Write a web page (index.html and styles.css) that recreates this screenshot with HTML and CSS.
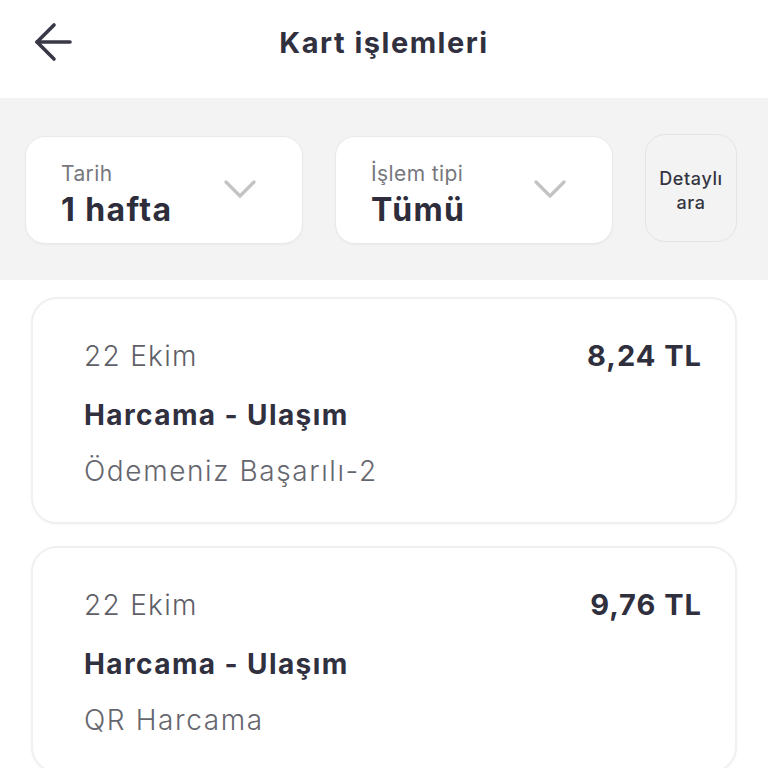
FILE: index.html
```html
<!DOCTYPE html>
<html lang="tr">
<head>
<meta charset="utf-8">
<link rel="stylesheet" href="styles.css">
</head>
<body>
<header class="topbar">
  <div class="back">
    <svg width="40" height="40" viewBox="0 0 40 40" fill="none" stroke="#383846" stroke-width="3.6" stroke-linecap="round" stroke-linejoin="round">
      <path d="M3 20 H36"/>
      <path d="M20 3 L3 20 L20 37"/>
    </svg>
  </div>
  <h1 class="title">Kart işlemleri</h1>
  <div class="spacer"></div>
</header>

<section class="filters">
  <div class="filter">
    <div class="filter-text">
      <div class="filter-label">Tarih</div>
      <div class="filter-value">1 hafta</div>
    </div>
    <svg class="chev" width="32" height="18" viewBox="0 0 32 18" fill="none" stroke="#c3c3c6" stroke-width="3.2" stroke-linecap="round" stroke-linejoin="round"><path d="M2 2 L16 16 L30 2"/></svg>
  </div>
  <div class="filter">
    <div class="filter-text">
      <div class="filter-label">İşlem tipi</div>
      <div class="filter-value">Tümü</div>
    </div>
    <svg class="chev" width="32" height="18" viewBox="0 0 32 18" fill="none" stroke="#c3c3c6" stroke-width="3.2" stroke-linecap="round" stroke-linejoin="round"><path d="M2 2 L16 16 L30 2"/></svg>
  </div>
  <div class="detail">Detaylı<br>ara</div>
</section>

<main class="list">
  <article class="tx">
    <div class="tx-row">
      <span class="tx-date">22 Ekim</span>
      <span class="tx-amount">8,24 TL</span>
    </div>
    <div class="tx-title">Harcama - Ulaşım</div>
    <div class="tx-sub">Ödemeniz Başarılı-2</div>
  </article>
  <article class="tx">
    <div class="tx-row">
      <span class="tx-date">22 Ekim</span>
      <span class="tx-amount">9,76 TL</span>
    </div>
    <div class="tx-title">Harcama - Ulaşım</div>
    <div class="tx-sub">QR Harcama</div>
  </article>
</main>
</body>
</html>
```

FILE: styles.css
```css
* { box-sizing: border-box; }
html, body { margin: 0; padding: 0; background: #ffffff; }
body {
  width: 768px;
  height: 768px;
  overflow: hidden;
  font-family: Inter, "Noto Sans", sans-serif;
  color: #2f2f3e;
}

.topbar {
  height: 98px;
  display: grid;
  grid-template-columns: 100px 1fr 100px;
  align-items: center;
  padding-bottom: 14px;
  background: #fff;
}
.back { padding-left: 34px; display: flex; align-items: center; }
.back svg { display: block; }
.title {
  margin: 0;
  text-align: center;
  font-size: 29px;
  font-weight: 700;
  letter-spacing: 1.5px;
  color: #30303f;
}

.filters {
  height: 182px;
  background: #f3f3f3;
  display: flex;
  gap: 32px;
  padding: 38px 31px 0 25px;
}
.filter {
  flex: 0 0 278px;
  height: 108px;
  background: #fff;
  border: 1.5px solid #e9e9e9;
  border-radius: 20px;
  display: flex;
  align-items: center;
  justify-content: space-between;
  padding: 0 46px 0 35px;
  box-shadow: 0 1px 2px rgba(0,0,0,0.04);
}
.filter-text { display: flex; flex-direction: column; margin-top: 12px; }
.filter-label {
  font-size: 21px;
  line-height: 28px;
  color: #77777e;
  font-weight: 400;
  letter-spacing: 0.4px;
}
.filter-value {
  font-size: 32px;
  line-height: 44px;
  font-weight: 700;
  color: #2d2d3c;
  letter-spacing: 1.4px;
}
.chev { display: block; margin-top: -2px; }
.detail {
  flex: 0 0 92px;
  height: 108px;
  margin-top: -2px;
  border: 1.5px solid #e4e4e4;
  border-radius: 20px;
  background: #f3f3f3;
  display: flex;
  align-items: center;
  justify-content: center;
  text-align: center;
  font-size: 18px;
  line-height: 24px;
  font-weight: 500;
  color: #353542;
  letter-spacing: 0.6px;
  padding-top: 6px;
}

.list {
  display: flex;
  flex-direction: column;
  gap: 22px;
  padding: 17px 31px 0 31px;
}
.tx {
  border: 2px solid #f0f0f0;
  border-radius: 26px;
  background: #fff;
  padding: 40px 33px 34px 51px;
  box-shadow: 0 1px 3px rgba(0,0,0,0.03);
}
.tx-row {
  display: flex;
  justify-content: space-between;
  align-items: baseline;
}
.tx-date {
  font-size: 28px;
  line-height: 34px;
  font-weight: 300;
  color: #5f5f68;
  letter-spacing: 1.3px;
}
.tx-amount {
  font-size: 29px;
  line-height: 34px;
  font-weight: 700;
  color: #2f2f3e;
  letter-spacing: 1px;
}
.tx-title {
  margin-top: 25px;
  font-size: 28px;
  line-height: 34px;
  font-weight: 700;
  color: #30303f;
  letter-spacing: 1.4px;
}
.tx-sub {
  margin-top: 22px;
  font-size: 28px;
  line-height: 34px;
  font-weight: 300;
  color: #66666e;
  letter-spacing: 1.6px;
}
```
